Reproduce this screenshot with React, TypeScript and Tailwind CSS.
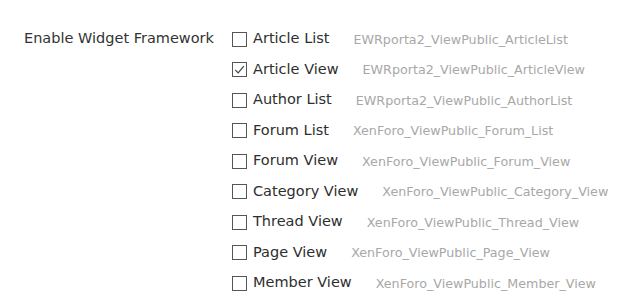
import React from "react";

const rows: { label: string; cls: string; checked?: boolean }[] = [
  { label: "Article List", cls: "EWRporta2_ViewPublic_ArticleList" },
  { label: "Article View", cls: "EWRporta2_ViewPublic_ArticleView", checked: true },
  { label: "Author List", cls: "EWRporta2_ViewPublic_AuthorList" },
  { label: "Forum List", cls: "XenForo_ViewPublic_Forum_List" },
  { label: "Forum View", cls: "XenForo_ViewPublic_Forum_View" },
  { label: "Category View", cls: "XenForo_ViewPublic_Category_View" },
  { label: "Thread View", cls: "XenForo_ViewPublic_Thread_View" },
  { label: "Page View", cls: "XenForo_ViewPublic_Page_View" },
  { label: "Member View", cls: "XenForo_ViewPublic_Member_View" },
];

function Box({ checked }: { checked?: boolean }) {
  return (
    <span className="w-[15px] h-[15px] border border-[#555] bg-white flex items-center justify-center shrink-0">
      {checked && (
        <svg width="13" height="13" viewBox="0 0 13 13">
          <path d="M2.2 6.8 L5.2 9.8 L10.8 3.2" fill="none" stroke="#444" strokeWidth="1.2" />
        </svg>
      )}
    </span>
  );
}

export default function App() {
  return (
    <div
      className="w-[623px] h-[300px] bg-white flex pt-[24px]"
      style={{ fontFamily: '"DejaVu Sans", sans-serif' }}
    >
      <div className="w-[232px] pl-[24px] text-[14.5px] text-[#333] h-[30px] flex items-center">
        Enable Widget Framework
      </div>
      <div className="flex flex-col">
        {rows.map((r) => (
          <div key={r.label} className="h-[30.5px] flex items-center">
            <Box checked={r.checked} />
            <span className="ml-[6px] text-[14.5px] text-[#2e2e2e]">{r.label}</span>
            <span className="ml-[24px] text-[12.7px] text-[#a8a8a8]">{r.cls}</span>
          </div>
        ))}
      </div>
    </div>
  );
}
